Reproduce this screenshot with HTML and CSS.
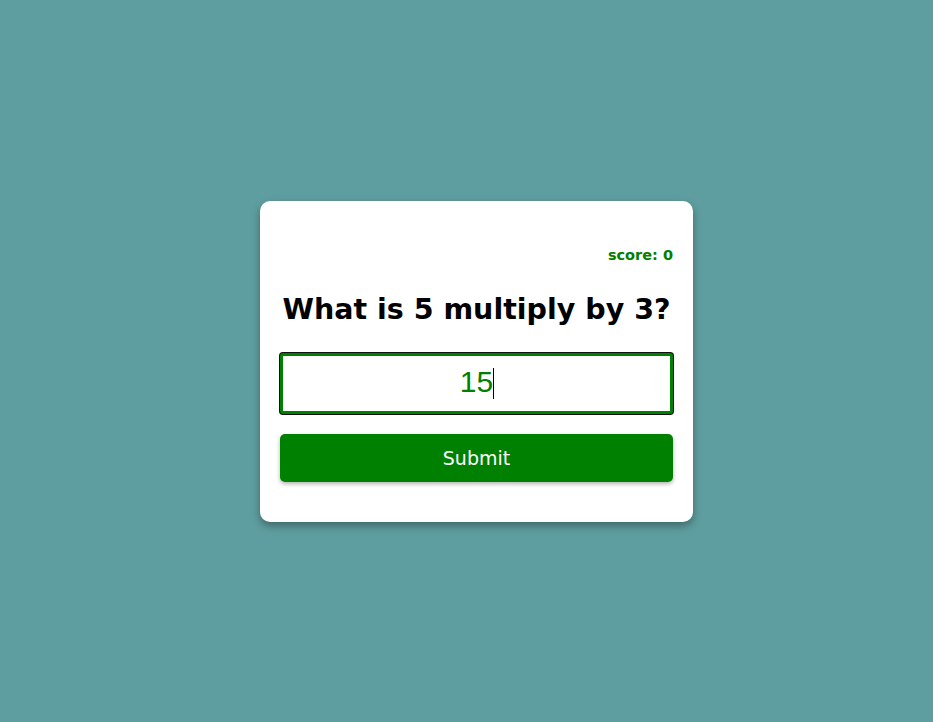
FILE: index.html
```html
<!DOCTYPE html>
<html lang="en">
<head>
<meta charset="utf-8">
<title>Multiplication Quiz</title>
<link rel="stylesheet" href="styles.css">
</head>
<body>
<main class="stage">
  <form class="card" onsubmit="return false">
    <p class="score">score: 0</p>
    <h1 class="question">What is 5 multiply by 3?</h1>
    <div class="field">
      <input class="answer" id="answer" type="text" value="15" autocomplete="off">
      <span class="caret"></span>
    </div>
    <button class="submit" type="submit">Submit</button>
  </form>
</main>
<script src="app.js"></script>
</body>
</html>
```
FILE: styles.css
```css
* { box-sizing: border-box; }
html, body { margin: 0; height: 100%; }
body {
  background: #5f9ea0;
  font-family: "Comic Sans MS", "DejaVu Sans", sans-serif;
}
.stage {
  height: 100%;
  display: flex;
  align-items: center;
  justify-content: center;
  padding-left: 20px;
}
.card {
  width: 433px;
  background: #fff;
  border-radius: 10px;
  box-shadow: 0 4px 8px rgba(0,0,0,0.35);
  padding: 20px 20px 40px;
  display: flex;
  flex-direction: column;
}
.score {
  margin: 26px 0 0;
  text-align: right;
  color: #008000;
  font-weight: bold;
  font-size: 14.5px;
  line-height: 16px;
}
.question {
  margin: 29px 0 0;
  font-size: 28.5px;
  line-height: 36px;
  font-weight: bold;
  color: #000;
  text-align: center;
  white-space: nowrap;
}
.field {
  position: relative;
  margin-top: 25px;
}
.answer {
  display: block;
  height: 61px;
  width: 100%;
  border: 3px solid #008000;
  border-radius: 3px;
  outline: none;
  box-shadow: 0 0 0 1px #111;
  text-align: center;
  color: #008000;
  caret-color: transparent;
  font-family: "Liberation Sans", Arial, sans-serif;
  font-size: 30px;
  padding: 0 0 3px;
}
.caret {
  position: absolute;
  left: calc(50% + 16px);
  top: 15px;
  width: 1px;
  height: 31px;
  background: #000;
}
.submit {
  margin-top: 20px;
  height: 48px;
  width: 100%;
  border: none;
  border-radius: 5px;
  background: #008000;
  color: #fff;
  font-family: "Comic Sans MS", "DejaVu Sans", sans-serif;
  font-size: 19px;
  box-shadow: 0 2px 4px rgba(0,0,0,0.3);
}
```
FILE: app.js
```js
var el = document.getElementById('answer');
el.focus();
el.setSelectionRange(el.value.length, el.value.length);
```
